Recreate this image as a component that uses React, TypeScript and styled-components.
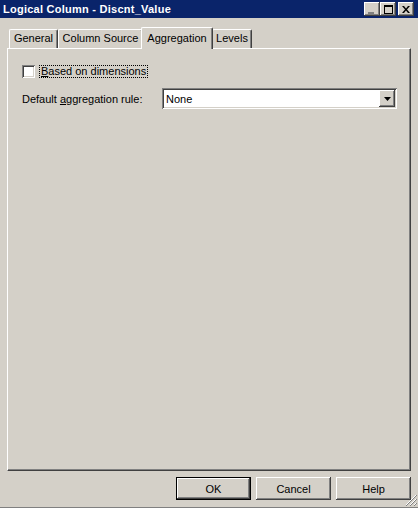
import React from 'react';
import styled, { createGlobalStyle, css } from 'styled-components';

const face = '#D4D0C8';
const shadow = '#808080';
const darkShadow = '#404040';

const GlobalStyle = createGlobalStyle`
  html, body {
    margin: 0;
    padding: 0;
    background: ${face};
  }
  body {
    font-family: "Liberation Sans", Arial, sans-serif;
    font-size: 11px;
    color: #000;
  }
`;

const raised = css`
  box-shadow:
    inset -1px -1px ${darkShadow},
    inset 1px 1px #fff,
    inset -2px -2px ${shadow};
`;

const Window = styled.div`
  position: relative;
  width: 418px;
  height: 508px;
  box-sizing: border-box;
  display: flex;
  flex-direction: column;
  background: ${face};
  border-bottom: 1px solid ${shadow};
  overflow: hidden;
`;

const TitleBar = styled.div`
  height: 18px;
  flex: none;
  display: flex;
  align-items: center;
  justify-content: space-between;
  padding: 0 4px 0 3px;
  background: #0a246a;
  color: #fff;
  font-weight: bold;
  font-size: 11px;
  letter-spacing: 0.25px;
`;

const TitleButtons = styled.div`
  display: flex;
  align-items: center;
`;

const TitleButton = styled.div<{ $gap?: boolean }>`
  width: 16px;
  height: 14px;
  margin-left: ${({ $gap }) => ($gap ? '2px' : '0')};
  background: ${face};
  display: flex;
  align-items: center;
  justify-content: center;
  ${raised}

  svg {
    display: block;
  }
`;

const Body = styled.div`
  flex: 1;
  display: flex;
  flex-direction: column;
  padding: 9px 7px 0 7px;
`;

const TabStrip = styled.div`
  height: 21px;
  display: flex;
  align-items: flex-end;
  padding-left: 2px;
`;

const Tab = styled.div<{ $active?: boolean; $w: number }>`
  position: relative;
  z-index: ${({ $active }) => ($active ? 2 : 1)};
  box-sizing: border-box;
  width: ${({ $w }) => $w}px;
  height: ${({ $active }) => ($active ? 22 : 19)}px;
  margin: ${({ $active }) => ($active ? '0 -1px -1px -2px' : '0')};
  padding-top: ${({ $active }) => ($active ? 4 : 2)}px;
  text-align: center;
  line-height: 13px;
  background: ${face};
  border-top: 1px solid #fff;
  border-left: 1px solid #fff;
  border-right: 1px solid ${darkShadow};
  border-radius: 2px 2px 0 0;
  box-shadow: inset -1px 0 ${shadow};
`;

const Panel = styled.div`
  box-sizing: border-box;
  height: 423px;
  border-top: 1px solid #fff;
  border-left: 1px solid #fff;
  border-right: 1px solid ${darkShadow};
  border-bottom: 1px solid ${darkShadow};
  box-shadow: inset -1px -1px ${shadow};
  padding: 16px 0 0 14px;
`;

const CheckRow = styled.label`
  display: flex;
  align-items: center;
  gap: 5px;
  height: 13px;
`;

const CheckBox = styled.span`
  width: 13px;
  height: 13px;
  box-sizing: border-box;
  background: #fff;
  box-shadow:
    inset 1px 1px ${shadow},
    inset -1px -1px #fff,
    inset 2px 2px ${darkShadow},
    inset -2px -2px ${face};
`;

const FocusLabel = styled.span`
  padding: 0 1px;
  line-height: 11px;
  outline: 1px dotted #000;
  outline-offset: 0;
`;

const FieldRow = styled.div`
  display: flex;
  align-items: center;
  margin-top: 10px;
`;

const FieldLabel = styled.span`
  width: 140px;
  flex: none;
`;

const Combo = styled.div`
  box-sizing: border-box;
  width: 235px;
  height: 21px;
  padding: 2px;
  display: flex;
  align-items: center;
  background: #fff;
  box-shadow:
    inset 1px 1px ${shadow},
    inset -1px -1px #fff,
    inset 2px 2px ${darkShadow},
    inset -2px -2px ${face};
`;

const ComboText = styled.span`
  flex: 1;
  padding-left: 2px;
`;

const ComboButton = styled.div`
  width: 16px;
  height: 17px;
  background: ${face};
  display: flex;
  align-items: center;
  justify-content: center;
  ${raised}
`;

const Footer = styled.div`
  display: flex;
  justify-content: flex-end;
  gap: 5px;
  margin-top: 6px;
`;

const Button = styled.div<{ $default?: boolean }>`
  box-sizing: border-box;
  width: 75px;
  height: 23px;
  display: flex;
  align-items: center;
  justify-content: center;
  background: ${face};
  ${({ $default }) =>
    $default
      ? css`
          border: 1px solid #000;
          box-shadow:
            inset -1px -1px ${darkShadow},
            inset 1px 1px #fff,
            inset -2px -2px ${shadow};
        `
      : raised}
`;

const Grip = styled.svg`
  position: absolute;
  right: 1px;
  bottom: 1px;
`;

const App: React.FC = () => (
  <>
    <GlobalStyle />
    <Window>
      <TitleBar>
        <span>Logical Column - Discnt_Value</span>
        <TitleButtons>
          <TitleButton>
            <svg width="8" height="9" viewBox="0 0 8 9">
              <rect x="0" y="7" width="6" height="2" fill="#808080" />
            </svg>
          </TitleButton>
          <TitleButton>
            <svg width="9" height="9" viewBox="0 0 9 9">
              <rect x="0.5" y="0.5" width="8" height="8" fill="none" stroke="#000" />
              <rect x="0" y="0" width="9" height="2" fill="#000" />
            </svg>
          </TitleButton>
          <TitleButton $gap>
            <svg width="8" height="7" viewBox="0 0 8 7">
              <path d="M0 0h2l2 2.5L6 0h2L5 3.5L8 7H6L4 4.5L2 7H0l3-3.5z" fill="#000" />
            </svg>
          </TitleButton>
        </TitleButtons>
      </TitleBar>
      <Body>
        <TabStrip>
          <Tab $w={49}>General</Tab>
          <Tab $w={85}>Column Source</Tab>
          <Tab $w={72} $active>Aggregation</Tab>
          <Tab $w={40}>Levels</Tab>
        </TabStrip>
        <Panel>
          <CheckRow>
            <CheckBox />
            <FocusLabel>
              <u>B</u>ased on dimensions
            </FocusLabel>
          </CheckRow>
          <FieldRow>
            <FieldLabel>
              Default <u>a</u>ggregation rule:
            </FieldLabel>
            <Combo>
              <ComboText>None</ComboText>
              <ComboButton>
                <svg width="7" height="4" viewBox="0 0 7 4">
                  <path d="M0 0h7L3.5 4z" fill="#000" />
                </svg>
              </ComboButton>
            </Combo>
          </FieldRow>
        </Panel>
        <Footer>
          <Button $default>OK</Button>
          <Button>Cancel</Button>
          <Button>Help</Button>
        </Footer>
      </Body>
      <Grip width="12" height="12" viewBox="0 0 12 12">
        <path d="M11 1L1 11M11 5L5 11M11 9L9 11" stroke="#fff" />
        <path d="M12 1L1 12M12 5L5 12M12 9L9 12" stroke="#808080" />
      </Grip>
    </Window>
  </>
);

export default App;
